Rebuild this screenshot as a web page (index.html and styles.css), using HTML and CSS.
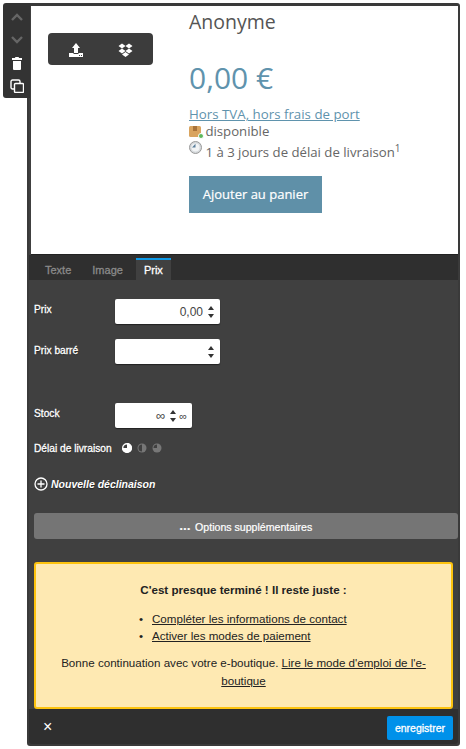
FILE: index.html
```html
<!DOCTYPE html>
<html lang="fr">
<head>
<meta charset="utf-8">
<title>Prix</title>
<link rel="stylesheet" href="styles.css">
</head>
<body>
<div class="editor">
  <div class="side">
    <svg class="dim" width="14" height="10" viewBox="0 0 14 10"><path d="M2 8l5-5 5 5" fill="none" stroke="currentColor" stroke-width="2.4"/></svg>
    <svg class="dim" width="14" height="10" viewBox="0 0 14 10"><path d="M2 2l5 5 5-5" fill="none" stroke="currentColor" stroke-width="2.4"/></svg>
    <svg width="10" height="13" viewBox="0 0 10 13"><path d="M3.500 0h3l.7 1H10v2H0V1h2.800zM1 4h8v8a1 1 0 0 1-1 1H2a1 1 0 0 1-1-1z" fill="currentColor"/></svg>
    <svg width="14" height="14" viewBox="0 0 14 14"><rect x="1" y="1" width="9" height="9" rx="1.5" fill="none" stroke="currentColor" stroke-width="1.4"/><rect x="4.500" y="4.500" width="9" height="9" rx="1" fill="#333" stroke="currentColor" stroke-width="1.4"/></svg>
  </div>

  <div class="product">
    <div class="media">
      <div class="media-bar">
        <svg width="16" height="16" viewBox="0 0 16 16"><path d="M8 1l4 5H10v5H6V6H4zM1 11h4.500v1h5v-1H15v4H1z" fill="#fff"/><path d="M11 13h1v1h-1zM13 13h1v1h-1z" fill="#3c3c3c"/></svg>
        <svg width="15" height="16" viewBox="0 0 15 16"><path d="M4 1.500L7.500 4 4 6.500.5 4zM11 1.500L14.500 4 11 6.500 7.500 4zM4 6.500L7.500 9 4 11.500.5 9zM11 6.500L14.500 9 11 11.500 7.500 9zM4 12.500l3.500-2.500 3.500 2.500L7.500 15z" fill="#fff"/></svg>
      </div>
    </div>
    <div class="info">
      <h1>Anonyme</h1>
      <div class="price">0,00 €</div>
      <a class="tax" href="#">Hors TVA, hors frais de port</a>
      <div class="line"><svg class="ico box" width="15" height="14" viewBox="0 0 15 14"><rect x="0" y="1" width="12" height="11" rx="1.500" fill="#d9a45f"/><rect x="4" y="1" width="4" height="5" fill="#a8733a"/><circle cx="12" cy="11" r="2.500" fill="#5db85c" stroke="#fff"/></svg> disponible</div>
      <div class="line"><svg class="ico clock" width="13" height="13" viewBox="0 0 13 13"><circle cx="6.500" cy="6.500" r="6" fill="#d5d9dc" stroke="#999"/><circle cx="6.500" cy="6.500" r="4" fill="#f2f4f5"/><path d="M6.500 2.800V6.500H3z" fill="#5b7f9c"/></svg> 1 à 3 jours de délai de livraison<sup>1</sup></div>
      <a class="buy" href="#">Ajouter au panier</a>
    </div>
  </div>

  <div class="tabs">
    <span class="tab">Texte</span>
    <span class="tab">Image</span>
    <span class="tab on">Prix</span>
  </div>

  <div class="panel">
    <div class="row">
      <label>Prix</label>
      <div class="input wide"><span>0,00</span><i class="spin"></i></div>
    </div>
    <div class="row barre">
      <label>Prix barré</label>
      <div class="input wide"><span></span><i class="spin"></i></div>
    </div>
    <div class="row stock">
      <label>Stock</label>
      <div class="input narrow"><span class="inf">∞</span><i class="spin"></i><small>∞</small></div>
    </div>
    <div class="delay">
      <label>Délai de livraison</label>
      <svg width="10" height="10" viewBox="0 0 10 10"><circle cx="5" cy="5" r="4.300" fill="none" stroke="#fff" stroke-width="1.400"/><path d="M5 5V0a5 5 0 0 1 5 5 5 5 0 0 1-5 5 5 5 0 0 1-5-5z" fill="#fff"/></svg>
      <svg width="10" height="10" viewBox="0 0 10 10"><circle cx="5" cy="5" r="4.500" fill="#777"/><path d="M5 1.500a3.500 3.500 0 0 0 0 7z" fill="#404040"/></svg>
      <svg width="10" height="10" viewBox="0 0 10 10"><circle cx="5" cy="5" r="4.500" fill="#777"/><path d="M5 1.500a3.500 3.500 0 0 0-3.500 3.500H5z" fill="#404040"/></svg>
    </div>
    <a class="variant" href="#">
      <svg width="14" height="14" viewBox="0 0 14 14"><circle cx="7" cy="7" r="6" fill="none" stroke="#fff" stroke-width="1.300"/><path d="M7 3.500v7M3.500 7h7" stroke="#fff" stroke-width="1.300"/></svg>
      Nouvelle déclinaison
    </a>
    <div class="more"><span class="dots">•••</span> Options supplémentaires</div>
    <div class="notice">
      <p class="lead">C'est presque terminé ! Il reste juste :</p>
      <ul>
        <li><a href="#">Compléter les informations de contact</a></li>
        <li><a href="#">Activer les modes de paiement</a></li>
      </ul>
      <p class="bye">Bonne continuation avec votre e-boutique. <a href="#">Lire le mode d'emploi de l'e-boutique</a></p>
    </div>
  </div>

  <div class="foot">
    <span class="close">×</span>
    <a class="save" href="#">enregistrer</a>
  </div>
</div>
</body>
</html>
```

FILE: styles.css
```css
*{ box-sizing:border-box; margin:0; padding:0;}
html,body{ background:#fff;}
body{ width:466px; height:749px; overflow:hidden; font-family:"Liberation Sans",Arial,sans-serif;}
a{ color:inherit;}
svg{ display:block;}

.editor{ position:relative; width:433px; height:743px; margin:3px 0 0 27px; display:flex; flex-direction:column; background:#404040; border:solid #3a3a3a; border-width:3px 2px 2px 2px; border-radius:3px;}

.side{ position:absolute; left:-26px; top:-3px; width:27px; height:95px; padding-top:9px; display:flex; flex-direction:column; align-items:center; gap:13px; background:#333; color:#fff; border-radius:3px 0 0 3px;}
.side svg:nth-child(3){ margin-top:-1px;}
.side svg:nth-child(4){ margin-top:-4px;}
.side .dim{ color:#666;}

.product{ height:249px; display:flex; background:#fff; margin-left:2px; border-bottom:1px solid #222; font-family:"Open Sans",sans-serif; color:#555;}
.media{ width:158px; padding:27px 0 0 17px;}
.media-bar{ width:105px; height:32px; display:flex; align-items:center; gap:34px; padding:1px 0 0 20px; background:#3c3c3c; border-radius:4px;}
.info{ flex:1; display:flex; flex-direction:column; align-items:flex-start;}
h1{ font-size:19.500px; font-weight:400; line-height:27px; margin-top:2px; color:#555;}
.price{ font-size:30px; line-height:41px; margin-top:22px; color:#5f93ad;}
.tax{ font-size:13.300px; line-height:19px; margin-top:7px; color:#5f93ad;}
.line{ display:flex; align-items:center; white-space:pre; font-size:13.200px; line-height:17px; margin-top:-1px; color:#666;}
.line + .line{ margin-top:4px;}
.ico.box{ margin-right:-2px;}
.ico.clock{ margin-top:-10px;}
sup{ font-size:10px; line-height:0; position:relative; top:-5px;}
.buy{ margin-top:15px; width:133px; height:37px; line-height:37px; text-align:center; font-size:13px; font-weight:500; color:#fff; -webkit-text-stroke:0.2px #fff; text-decoration:none; background:#5f90a8;}

.tabs{ height:25px; display:flex; padding-top:3px; padding-left:9px; background:#2f2f2f; font-size:11px; -webkit-text-stroke:0.3px currentColor;}
.tab{ padding:2px 7px 0; line-height:21px; color:#8a8a8a; margin-right:7px;}
.tab:nth-child(2){ margin-right:6px;}
.tab.on{ color:#fff; background:#404040; border-top:2px solid #0e9ae8; margin-right:0; padding:0 8px;}

.panel{ flex:1; padding:19px 0 0 5px; color:#fff; font-size:10.200px;}
label{ display:block; width:81px; -webkit-text-stroke:0.3px #fff; text-shadow:0 1px 1px #222;}
.row{ display:flex; height:25px;}
.row label{ padding-top:5px;}
.barre{ margin-top:15px;}
.barre label{ padding-top:6px;}
.stock{ margin-top:39px;}
.input{ height:25px; display:flex; align-items:center; justify-content:flex-end; background:#fff; color:#444; font-size:12px; border-radius:2px; box-shadow:0 1px 1px #222;}
.input.wide{ width:105px; padding-right:5px;}
.input.narrow{ width:77px; padding-right:5px;}
.inf{ font-size:13px;}
.spin{ display:block; width:7px; height:12px; margin-left:5px; position:relative;}
.spin:before,.spin:after{ content:""; position:absolute; left:0; border-left:3.500px solid transparent; border-right:3.500px solid transparent;}
.spin:before{ top:0; border-bottom:4px solid #333;}
.spin:after{ bottom:0; border-top:4px solid #333;}
.input small{ font-size:11px; margin-left:2px;}

.delay{ display:flex; align-items:center; height:14px; margin-top:13px; gap:5px;}
.delay label{ width:auto; margin-right:5px;}
.variant{ display:flex; align-items:center; gap:3px; margin-top:22px; font-size:10.500px; font-style:italic; font-weight:bold; text-decoration:none; text-shadow:0 1px 1px #222;}

.more{ width:424px; height:26px; margin-top:22px; line-height:28px; text-align:center; background:#757575; border-radius:3px; font-size:10.600px; -webkit-text-stroke:0.2px #fff;}
.dots{ font-size:8px; letter-spacing:1px; margin-right:1px;}

.notice{ width:419px; height:147px; margin-top:23px; padding:17px 10px 0; background:#fee9b2; border:2px solid #fdc30e; border-radius:3px; color:#222; font-size:11.600px; line-height:17px; text-align:center;}
.lead{ font-weight:bold;}
.notice ul{ list-style:none; margin:12px 0 0 93px; text-align:left;}
.notice li{ position:relative; padding-left:13px;}
.notice li:before{ content:"•"; position:absolute; left:0;}
.bye{ margin-top:10px; line-height:18px;}

.foot{ height:35px; display:flex; align-items:center; justify-content:space-between; padding:3px 5px 0 14px; background:#2f2f2f; border-radius:0 0 3px 3px;}
.close{ color:#fff; font-size:16px; line-height:1; margin-top:-3px;}
.save{ width:66px; height:24px; line-height:24px; text-align:center; background:#0091ea; color:#fff; font-size:10.500px; -webkit-text-stroke:0.3px #fff; text-decoration:none; border-radius:2px;}
```
